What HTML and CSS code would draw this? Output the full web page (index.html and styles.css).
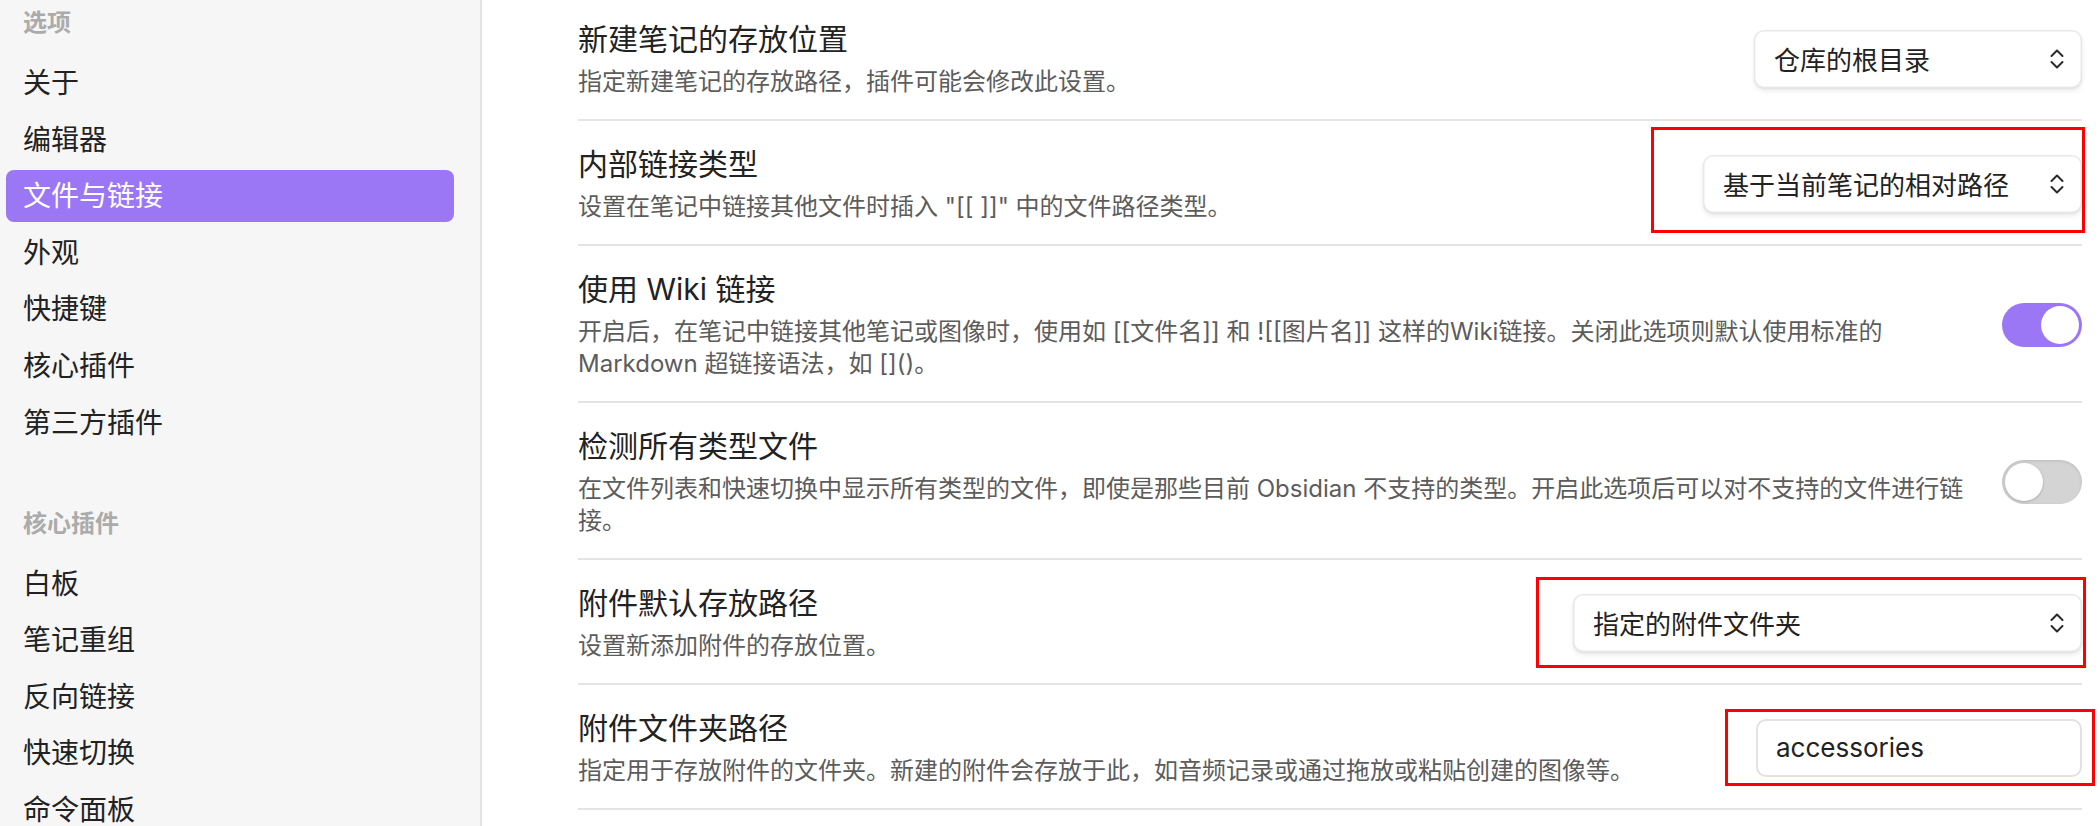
FILE: index.html
```html
<!DOCTYPE html>
<html lang="zh-CN">
<head>
<meta charset="utf-8">
<title>设置 - 文件与链接</title>
<link rel="stylesheet" href="styles.css">
</head>
<body>
<div class="app">
  <aside class="sidebar">
    <div class="group">
      <div class="group-title">选项</div>
      <div class="nav-item">关于</div>
      <div class="nav-item">编辑器</div>
      <div class="nav-item active">文件与链接</div>
      <div class="nav-item">外观</div>
      <div class="nav-item">快捷键</div>
      <div class="nav-item">核心插件</div>
      <div class="nav-item">第三方插件</div>
    </div>
    <div class="group group-next">
      <div class="group-title">核心插件</div>
      <div class="nav-item">白板</div>
      <div class="nav-item">笔记重组</div>
      <div class="nav-item">反向链接</div>
      <div class="nav-item">快速切换</div>
      <div class="nav-item">命令面板</div>
    </div>
  </aside>
  <main class="main">
    <div class="settings">
      <div class="row">
        <div class="info">
          <div class="name">新建笔记的存放位置</div>
          <div class="desc">指定新建笔记的存放路径，插件可能会修改此设置。</div>
        </div>
        <div class="control">
          <div class="dropdown dd-root"><span>仓库的根目录</span>
            <svg class="chev" width="14" height="22" viewBox="0 0 14 22"><path d="M1.5 8 L7 2.5 L12.5 8 M1.5 14 L7 19.5 L12.5 14" fill="none" stroke="#2a2a2a" stroke-width="2" stroke-linecap="round" stroke-linejoin="round"/></svg>
          </div>
        </div>
      </div>
      <div class="row">
        <div class="info">
          <div class="name">内部链接类型</div>
          <div class="desc">设置在笔记中链接其他文件时插入 "[[ ]]" 中的文件路径类型。</div>
        </div>
        <div class="control">
          <div class="dropdown dd-relative"><span>基于当前笔记的相对路径</span>
            <svg class="chev" width="14" height="22" viewBox="0 0 14 22"><path d="M1.5 8 L7 2.5 L12.5 8 M1.5 14 L7 19.5 L12.5 14" fill="none" stroke="#2a2a2a" stroke-width="2" stroke-linecap="round" stroke-linejoin="round"/></svg>
          </div>
          <div class="mark mark-a"></div>
        </div>
      </div>
      <div class="row">
        <div class="info">
          <div class="name">使用 Wiki 链接</div>
          <div class="desc">开启后，在笔记中链接其他笔记或图像时，使用如 [[文件名]] 和 ![[图片名]] 这样的Wiki链接。关闭此选项则默认使用标准的 Markdown 超链接语法，如 []()。</div>
        </div>
        <div class="control">
          <div class="toggle on"><div class="knob"></div></div>
        </div>
      </div>
      <div class="row">
        <div class="info">
          <div class="name">检测所有类型文件</div>
          <div class="desc">在文件列表和快速切换中显示所有类型的文件，即使是那些目前 Obsidian 不支持的类型。开启此选项后可以对不支持的文件进行链接。</div>
        </div>
        <div class="control">
          <div class="toggle"><div class="knob"></div></div>
        </div>
      </div>
      <div class="row">
        <div class="info">
          <div class="name">附件默认存放路径</div>
          <div class="desc">设置新添加附件的存放位置。</div>
        </div>
        <div class="control">
          <div class="dropdown dd-folder"><span>指定的附件文件夹</span>
            <svg class="chev" width="14" height="22" viewBox="0 0 14 22"><path d="M1.5 8 L7 2.5 L12.5 8 M1.5 14 L7 19.5 L12.5 14" fill="none" stroke="#2a2a2a" stroke-width="2" stroke-linecap="round" stroke-linejoin="round"/></svg>
          </div>
          <div class="mark mark-b"></div>
        </div>
      </div>
      <div class="row">
        <div class="info">
          <div class="name">附件文件夹路径</div>
          <div class="desc">指定用于存放附件的文件夹。新建的附件会存放于此，如音频记录或通过拖放或粘贴创建的图像等。</div>
        </div>
        <div class="control">
          <div class="text-input">accessories</div>
          <div class="mark mark-c"></div>
        </div>
      </div>
    </div>
  </main>
</div>
</body>
</html>
```
FILE: styles.css
```css
* { box-sizing: border-box; }
html, body { margin: 0; padding: 0; }
body {
  width: 2100px;
  height: 826px;
  overflow: hidden;
  font-family: Inter, "Noto Sans CJK SC", sans-serif;
  color: #222222;
  background: #ffffff;
}
.app {
  display: flex;
  height: 826px;
}
.sidebar {
  width: 482px;
  flex: none;
  background: #f6f6f6;
  border-right: 2px solid #e4e4e4;
  padding: 8px 26px 0 6px;
  overflow: hidden;
}
.group-title {
  height: 30px;
  line-height: 30px;
  padding-left: 17px;
  font-size: 24px;
  font-weight: 700;
  color: #ababab;
  margin-bottom: 19px;
}
.group-next { margin-top: 60px; }
.nav-item {
  height: 52px;
  line-height: 52px;
  padding-left: 17px;
  margin-bottom: 4.6px;
  font-size: 28px;
  color: #222222;
  border-radius: 8px;
}
.nav-item.active {
  background: #9b77f5;
  color: #ffffff;
}
.main {
  flex: 1;
  overflow: hidden;
  padding: 0 18px 0 96px;
}
.settings { margin-top: -4px; }
.row {
  display: flex;
  align-items: center;
  padding: 23px 0 21px;
  border-bottom: 2px solid #e4e4e4;
}
.info {
  flex: 1 1 auto;
  min-width: 0;
  margin-right: 30px;
}
.name {
  font-size: 30px;
  line-height: 40px;
  color: #222222;
}
.desc {
  margin-top: 7px;
  font-size: 24px;
  line-height: 32px;
  color: #5c5c5c;
}
.control {
  position: relative;
  flex: none;
  display: flex;
  align-items: center;
}
.dropdown {
  height: 58px;
  display: flex;
  align-items: center;
  justify-content: space-between;
  padding: 0 18px 0 20px;
  background: #ffffff;
  border-radius: 10px;
  font-size: 26px;
  color: #222222;
  box-shadow: inset 0 0 0 1.5px rgba(0,0,0,0.09), 0 3px 5px rgba(0,0,0,0.08), 0 1px 2px rgba(0,0,0,0.06);
}
.dd-root { width: 328px; }
.dd-relative { width: 379px; }
.dd-folder { width: 509px; }
.chev { flex: none; }
.text-input {
  width: 326px;
  height: 58px;
  line-height: 54px;
  padding: 0 18px;
  border: 2px solid #e2e2e2;
  border-radius: 10px;
  background: #ffffff;
  font-size: 26px;
  color: #222222;
}
.toggle {
  position: relative;
  width: 80px;
  height: 44px;
  border-radius: 22px;
  background: #d4d4d4;
  box-shadow: inset 0 1px 3px rgba(0,0,0,0.12);
}
.toggle.on {
  background: #9b77f5;
  box-shadow: none;
}
.knob {
  position: absolute;
  top: 3px;
  left: 3px;
  width: 38px;
  height: 38px;
  border-radius: 50%;
  background: #ffffff;
  box-shadow: 0 1px 3px rgba(0,0,0,0.2);
}
.toggle.on .knob { left: 39px; box-shadow: none; }
.mark {
  position: absolute;
  border: 3px solid #ff0000;
  pointer-events: none;
}
.mark-a { top: -28px; bottom: -20px; left: -52px; right: -3px; }
.mark-b { top: -17px; bottom: -16px; left: -37px; right: -4px; }
.mark-c { top: -10px; bottom: -9px; left: -31px; right: -13px; }
```
